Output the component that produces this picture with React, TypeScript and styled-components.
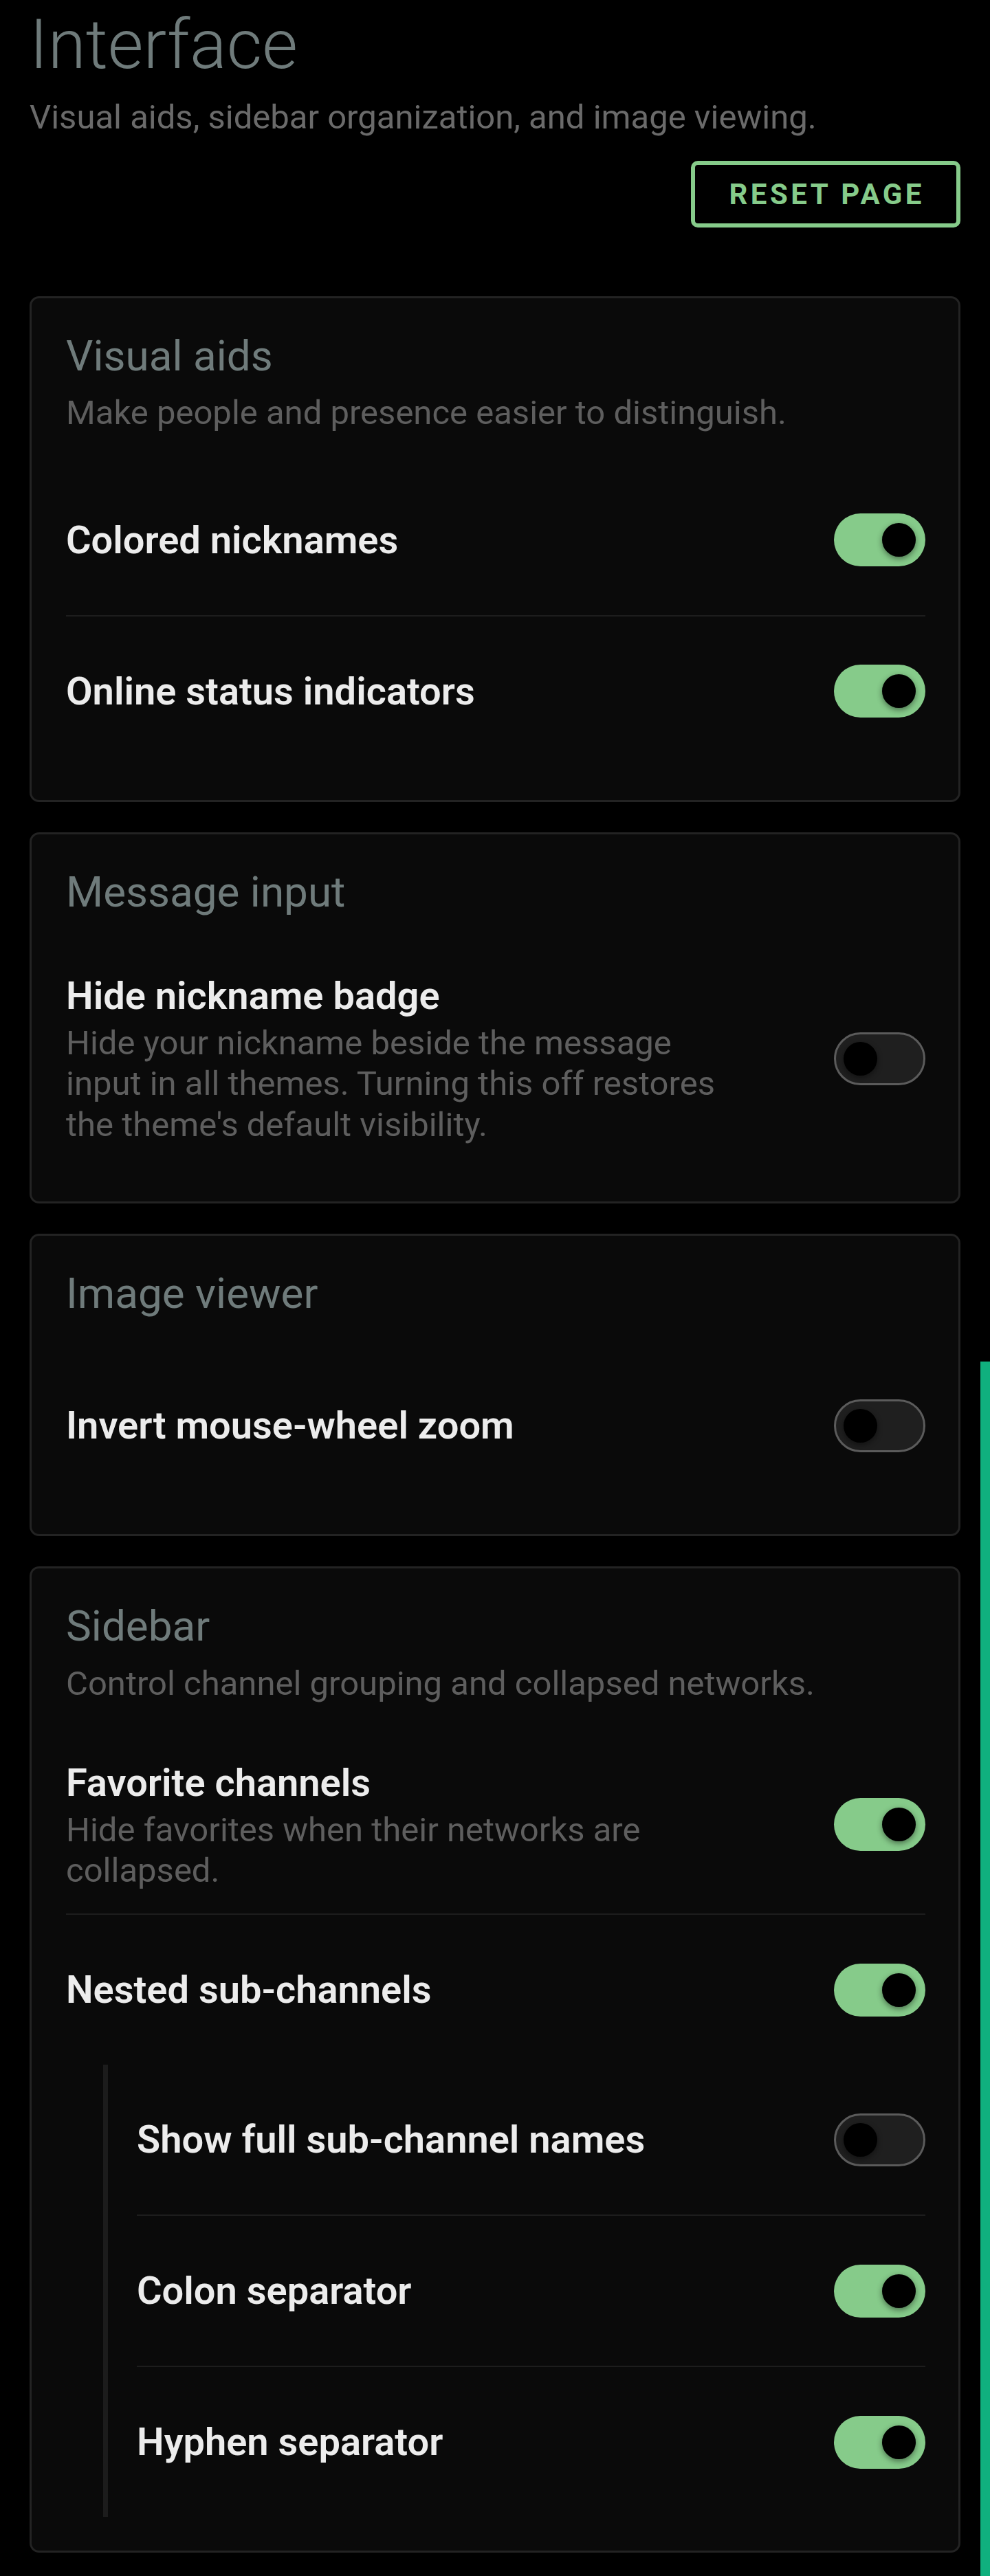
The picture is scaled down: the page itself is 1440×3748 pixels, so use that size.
import styled, { createGlobalStyle } from "styled-components";

const GlobalStyle = createGlobalStyle`
  html, body {
    margin: 0;
    padding: 0;
    background: #000;
  }
  body {
    font-family: Roboto, "Noto Sans", "Liberation Sans", sans-serif;
    -webkit-font-smoothing: antialiased;
  }
  * { box-sizing: border-box; }
`;

type Setting = {
  label: string;
  hint?: string;
  on: boolean;
};

const Toggle = ({ on }: { on: boolean }) => (
  <Switch $on={on} role="switch" aria-checked={on}>
    <Knob $on={on} />
  </Switch>
);

const SettingRow = ({ label, hint, on }: Setting) => (
  <Row>
    <RowText>
      <Label>{label}</Label>
      {hint && <Hint>{hint}</Hint>}
    </RowText>
    <Toggle on={on} />
  </Row>
);

const App = () => {
  return (
    <Page>
      <GlobalStyle />
      <Title>Interface</Title>
      <Subtitle>Visual aids, sidebar organization, and image viewing.</Subtitle>
      <Actions>
        <ResetButton>Reset page</ResetButton>
      </Actions>

      <Cards>
        <Card>
          <CardHead>
            <CardTitle>Visual aids</CardTitle>
            <CardDesc>Make people and presence easier to distinguish.</CardDesc>
          </CardHead>
          <SettingRow label="Colored nicknames" on />
          <Divider />
          <SettingRow label="Online status indicators" on />
        </Card>

        <Card>
          <CardHead>
            <CardTitle>Message input</CardTitle>
          </CardHead>
          <SettingRow
            label="Hide nickname badge"
            hint="Hide your nickname beside the message input in all themes. Turning this off restores the theme's default visibility."
            on={false}
          />
        </Card>

        <Card>
          <CardHead>
            <CardTitle>Image viewer</CardTitle>
          </CardHead>
          <SettingRow label="Invert mouse-wheel zoom" on={false} />
        </Card>

        <Card>
          <CardHead>
            <CardTitle>Sidebar</CardTitle>
            <CardDesc>Control channel grouping and collapsed networks.</CardDesc>
          </CardHead>
          <SettingRow
            label="Favorite channels"
            hint="Hide favorites when their networks are collapsed."
            on
          />
          <Divider />
          <SettingRow label="Nested sub-channels" on />
          <Nested>
            <SettingRow label="Show full sub-channel names" on={false} />
            <Divider />
            <SettingRow label="Colon separator" on />
            <Divider />
            <SettingRow label="Hyphen separator" on />
          </Nested>
        </Card>
      </Cards>

      <ScrollThumb />
    </Page>
  );
};

export default App;

const Page = styled.div`
  position: relative;
  min-height: 3748px;
  padding: 5px 43px 35px 43px;
  background: #000;
`;

const Title = styled.h1`
  margin: 0;
  font-size: 100px;
  line-height: 1.2;
  font-weight: 300;
  color: #6f7b7b;
`;

const Subtitle = styled.p`
  margin: 9px 0 0;
  font-size: 49px;
  line-height: 1.5;
  color: #6a6a6a;
`;

const Actions = styled.div`
  display: flex;
  justify-content: flex-end;
  margin-top: 26px;
`;

const ResetButton = styled.button`
  height: 97px;
  padding: 0 46px 0 49px;
  border: 6px solid #86cb8a;
  border-radius: 10px;
  background: transparent;
  color: #86cb8a;
  font-family: Roboto, "Liberation Sans", sans-serif;
  font-size: 42px;
  font-weight: 700;
  letter-spacing: 4.5px;
  text-transform: uppercase;
  cursor: pointer;
`;

const Cards = styled.div`
  display: flex;
  flex-direction: column;
  gap: 44px;
  margin-top: 100px;
`;

const Card = styled.section`
  background: #0a0a0a;
  border: 3px solid #232323;
  border-radius: 14px;
  padding: 47px 48px 49px 50px;
`;

const CardHead = styled.header`
  display: flex;
  flex-direction: column;
  gap: 17px;
  margin-bottom: 46px;
`;

const CardTitle = styled.h2`
  margin: 0;
  font-size: 62px;
  line-height: 1.2;
  font-weight: 400;
  color: #6f7b7b;
`;

const CardDesc = styled.p`
  margin: 0;
  font-size: 49px;
  line-height: 1.2;
  color: #5e5e5e;
`;

const Row = styled.div`
  display: flex;
  align-items: center;
  justify-content: space-between;
  gap: 135px;
  min-height: 218px;
  padding: 33px 0;
`;

const RowText = styled.div`
  display: flex;
  flex-direction: column;
  gap: 4px;
  flex: 1;
  min-width: 0;
`;

const Label = styled.div`
  font-size: 56px;
  line-height: 1.25;
  font-weight: 600;
  color: #ececec;
`;

const Hint = styled.div`
  font-size: 49px;
  line-height: 1.21;
  color: #5e5e5e;
`;

const Divider = styled.hr`
  margin: 0;
  border: 0;
  height: 2px;
  background: #1d1d1d;
`;

const Nested = styled.div`
  margin-left: 54px;
  padding-left: 42px;
  border-left: 7px solid #1c1c1c;
`;

const Switch = styled.button<{ $on: boolean }>`
  position: relative;
  flex: none;
  width: 133px;
  height: 77px;
  padding: 0;
  border-radius: 39px;
  border: ${(p) => (p.$on ? "0" : "3px solid #5b5b5b")};
  background: ${(p) => (p.$on ? "#86cb8a" : "#1f1f1f")};
  cursor: pointer;
`;

const Knob = styled.span<{ $on: boolean }>`
  position: absolute;
  top: 50%;
  width: 49px;
  height: 49px;
  margin-top: -24.5px;
  border-radius: 50%;
  background: #000;
  box-shadow: 0 3px 8px rgba(0, 0, 0, 0.45);
  ${(p) => (p.$on ? "right: 14px;" : "left: 11px;")}
`;

const ScrollThumb = styled.div`
  position: absolute;
  right: 0;
  top: 1981px;
  bottom: 0;
  width: 14px;
  background: #10b07e;
`;
